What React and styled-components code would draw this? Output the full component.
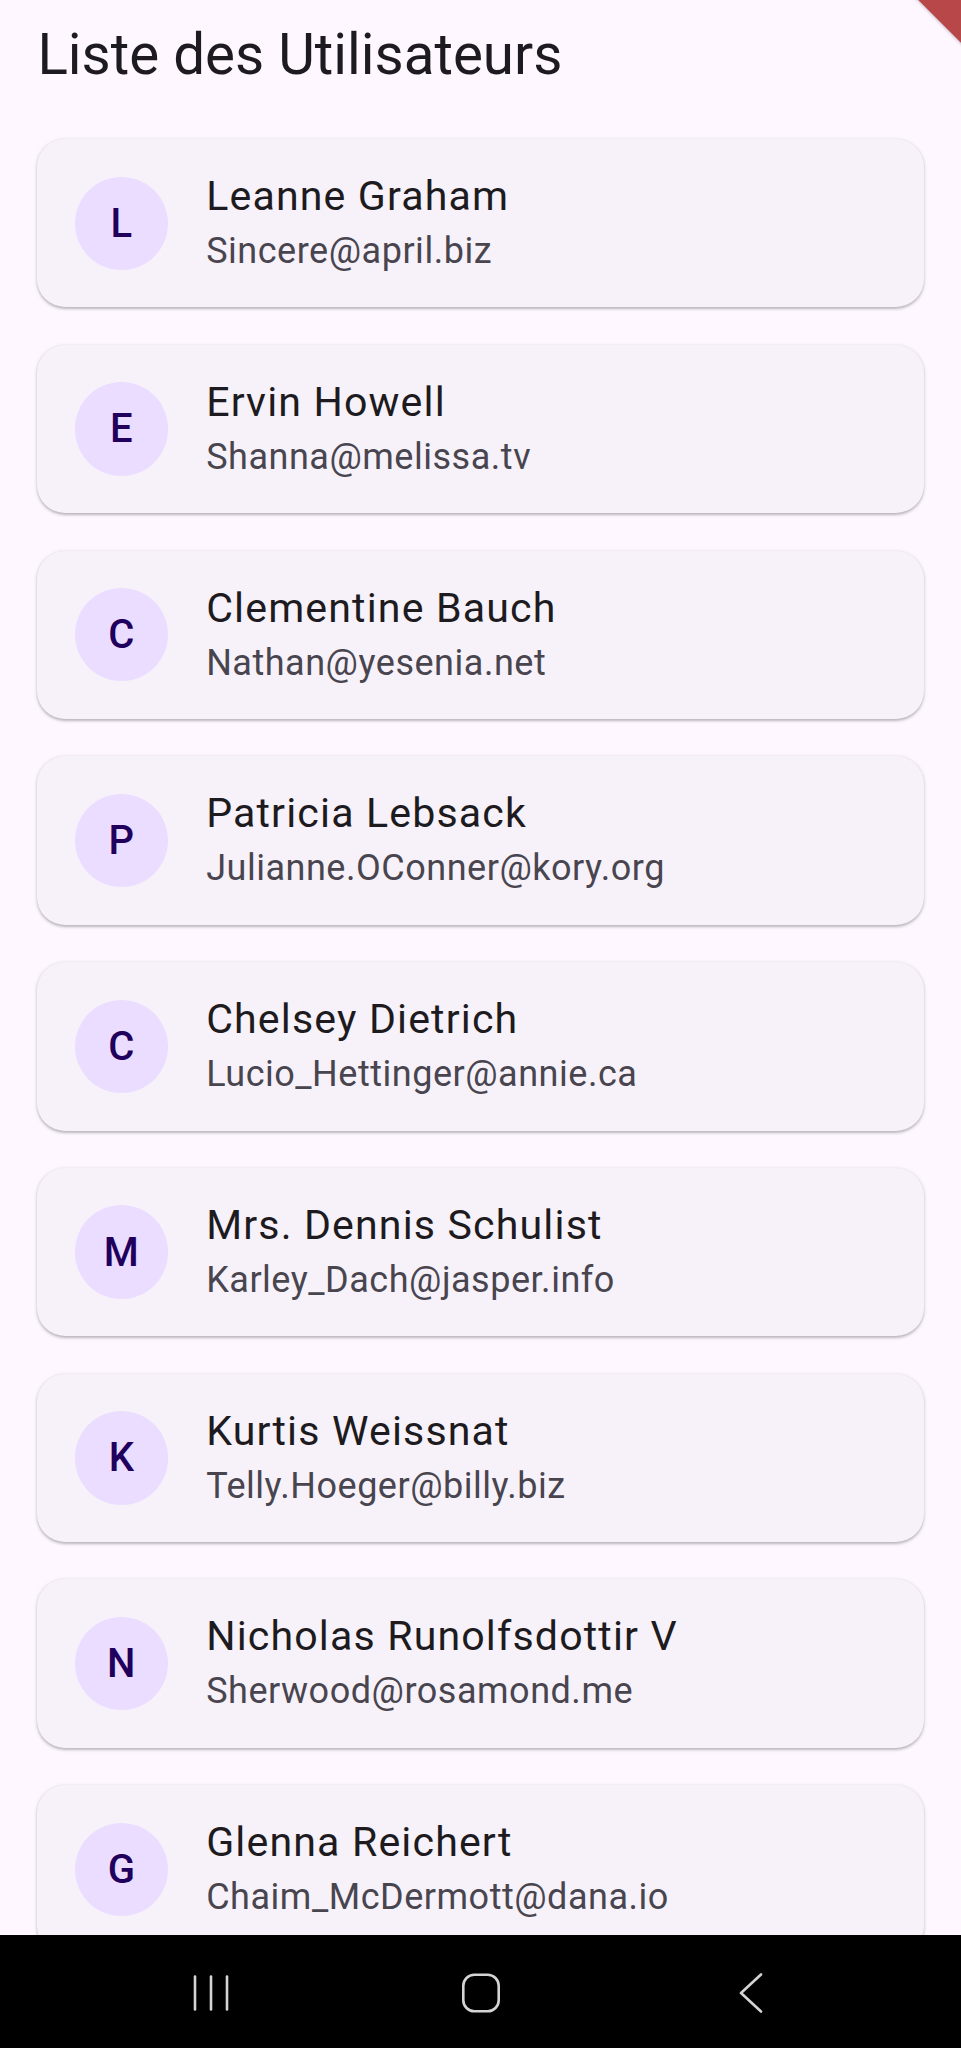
import React from "react";
import styled, { createGlobalStyle } from "styled-components";

const GlobalStyle = createGlobalStyle`
  html, body {
    margin: 0;
    padding: 0;
    background: #FEF7FF;
    font-family: Roboto, "Noto Sans", "Liberation Sans", sans-serif;
  }
  * { box-sizing: border-box; }
`;

const users = [
  { name: "Leanne Graham", email: "Sincere@april.biz" },
  { name: "Ervin Howell", email: "Shanna@melissa.tv" },
  { name: "Clementine Bauch", email: "Nathan@yesenia.net" },
  { name: "Patricia Lebsack", email: "Julianne.OConner@kory.org" },
  { name: "Chelsey Dietrich", email: "Lucio_Hettinger@annie.ca" },
  { name: "Mrs. Dennis Schulist", email: "Karley_Dach@jasper.info" },
  { name: "Kurtis Weissnat", email: "Telly.Hoeger@billy.biz" },
  { name: "Nicholas Runolfsdottir V", email: "Sherwood@rosamond.me" },
  { name: "Glenna Reichert", email: "Chaim_McDermott@dana.io" },
];

const Screen = styled.div`
  position: relative;
  width: 100%;
  height: 2048px;
  display: flex;
  flex-direction: column;
  overflow: hidden;
  background: #FEF7FF;
`;

const Header = styled.header`
  flex-shrink: 0;
  height: 118.5px;
  padding: 27px 0 0 37.4px;
`;

const Title = styled.h1`
  margin: 0;
  font-family: Roboto, sans-serif;
  font-weight: 400;
  font-size: 56.5px;
  line-height: 56.5px;
  color: #1D1B20;
`;

const List = styled.main`
  flex: 1;
  min-height: 0;
  overflow: hidden;
  display: flex;
  flex-direction: column;
  gap: 37.4px;
  padding: 20.5px 37.4px 0;
`;

const Card = styled.div`
  flex-shrink: 0;
  height: 168.4px;
  display: flex;
  align-items: center;
  gap: 38px;
  padding: 0 37.4px;
  background: #F7F2FA;
  border-radius: 28px;
  box-shadow: 0 1.5px 2.5px rgba(0, 0, 0, 0.22), 0 1px 4px 1px rgba(0, 0, 0, 0.06);
`;

const Avatar = styled.div`
  flex-shrink: 0;
  width: 93.4px;
  height: 93.4px;
  border-radius: 50%;
  background: #EADDFF;
  color: #21005D;
  display: flex;
  align-items: center;
  justify-content: center;
  font-family: Roboto, sans-serif;
  font-weight: 500;
  font-size: 40px;
  letter-spacing: 0.4px;
`;

const Texts = styled.div`
  display: flex;
  flex-direction: column;
  min-width: 0;
  margin-top: -1px;
`;

const Name = styled.div`
  font-family: Roboto, sans-serif;
  font-size: 41.1px;
  line-height: 58px;
  letter-spacing: 1.15px;
  color: #1D1B20;
  white-space: nowrap;
`;

const Email = styled.div`
  font-family: Roboto, sans-serif;
  font-size: 36px;
  line-height: 53.5px;
  letter-spacing: 0.52px;
  color: #49454F;
  white-space: nowrap;
`;

const NavBar = styled.nav`
  flex-shrink: 0;
  height: 113px;
  background: #000;
  display: flex;
  align-items: center;
  justify-content: center;
  gap: 170px;
  padding-top: 3px;
`;

const NavButton = styled.div`
  width: 100px;
  height: 44px;
  display: flex;
  align-items: center;
  justify-content: center;
  color: #D4D4D4;
`;

const DebugBanner = styled.div`
  position: absolute;
  top: -43px;
  right: -185px;
  width: 300px;
  height: 100px;
  background: #B8474A;
  transform: rotate(45deg);
  box-shadow: 0 0 4px rgba(0, 0, 0, 0.35);
  pointer-events: none;
`;

const RecentsIcon = () => (
  <svg width="36" height="36" viewBox="0 0 36 36" fill="none" stroke="currentColor" strokeWidth="2.6" strokeLinecap="round">
    <line x1="2" y1="1.5" x2="2" y2="34.5" />
    <line x1="18" y1="1.5" x2="18" y2="34.5" />
    <line x1="34" y1="1.5" x2="34" y2="34.5" />
  </svg>
);

const HomeIcon = () => (
  <svg width="40" height="40" viewBox="0 0 40 40" fill="none" stroke="currentColor" strokeWidth="2.6">
    <rect x="2.3" y="1.8" width="35.4" height="36.4" rx="11" />
  </svg>
);

const BackIcon = () => (
  <svg width="26" height="40" viewBox="0 0 26 40" fill="none" stroke="currentColor" strokeWidth="2.6" strokeLinecap="round" strokeLinejoin="round">
    <polyline points="23,1.5 3,20 23,38.5" />
  </svg>
);

export default function App() {
  return (
    <>
      <GlobalStyle />
      <Screen>
        <Header>
          <Title>Liste des Utilisateurs</Title>
        </Header>
        <List>
          {users.map((u) => (
            <Card key={u.email}>
              <Avatar>{u.name.charAt(0)}</Avatar>
              <Texts>
                <Name>{u.name}</Name>
                <Email>{u.email}</Email>
              </Texts>
            </Card>
          ))}
        </List>
        <NavBar>
          <NavButton><RecentsIcon /></NavButton>
          <NavButton><HomeIcon /></NavButton>
          <NavButton><BackIcon /></NavButton>
        </NavBar>
        <DebugBanner />
      </Screen>
    </>
  );
}
